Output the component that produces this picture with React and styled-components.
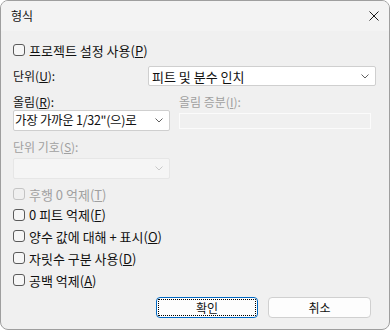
import React from "react";
import styled, { createGlobalStyle } from "styled-components";

const GlobalStyle = createGlobalStyle`
  html, body {
    margin: 0;
    padding: 0;
    background: #ffffff;
  }
  body {
    font-family: "Noto Sans CJK KR", "Noto Sans", sans-serif;
    font-size: 12px;
    color: #111;
  }
`;

const Window = styled.div`
  width: 390px;
  height: 330px;
  box-sizing: border-box;
  border: 1px solid #9e9e9e;
  border-radius: 8px;
  overflow: hidden;
  background: #f0f0f0;
  display: flex;
  flex-direction: column;
`;

const TitleBar = styled.div`
  height: 30px;
  flex: none;
  background: #f3f3f3;
  display: flex;
  align-items: center;
  justify-content: space-between;
  padding: 0 10px;
`;

const Title = styled.span`
  font-size: 12px;
  line-height: 1;
`;

const CloseIcon = styled.svg`
  width: 10px;
  height: 10px;
  display: block;
`;

const Body = styled.div`
  flex: 1;
  padding: 9px 12px 0 12px;
  display: flex;
  flex-direction: column;
`;

const Mn = styled.span`
  text-decoration: underline;
  text-underline-offset: 1px;
`;

const CheckRow = styled.label`
  height: ${(p) => p.$h || 20}px;
  margin-top: ${(p) => p.$mt || 0}px;
  display: flex;
  align-items: center;
  gap: 4px;
  color: ${(p) => (p.$disabled ? "#a0a0a0" : "#111")};
  font-size: 13px;
  line-height: 1;
`;

const Box = styled.span`
  width: 12px;
  height: 12px;
  box-sizing: border-box;
  border: 1px solid ${(p) => (p.$disabled ? "#c4c4c4" : "#5a5a5a")};
  border-radius: 3px;
  background: ${(p) => (p.$disabled ? "#f0f0f0" : "#f6f6f6")};
  flex: none;
`;

const UnitRow = styled.div`
  margin-top: 6px;
  height: 20px;
  display: flex;
  align-items: center;
`;

const Label = styled.span`
  color: ${(p) => (p.$disabled ? "#a0a0a0" : "#111")};
  line-height: 16px;
  height: 16px;
  display: block;
`;

const UnitLabel = styled(Label)`
  width: 135px;
  flex: none;
`;

const Select = styled.div`
  width: ${(p) => p.$w}px;
  height: ${(p) => p.$h || 21}px;
  margin-top: ${(p) => p.$mt || 0}px;
  box-sizing: border-box;
  border: 1px solid ${(p) => (p.$disabled ? "#e6e6e6" : "#cfcfcf")};
  border-radius: 2px;
  background: ${(p) => (p.$disabled ? "#f5f5f5" : "#ffffff")};
  display: flex;
  align-items: center;
  justify-content: space-between;
  padding: 0 6px 0 ${(p) => p.$pl || 3}px;
  font-size: ${(p) => p.$fs || 12}px;
  letter-spacing: ${(p) => p.$ls || 0}px;
  line-height: 1;
`;

const Chevron = styled.svg`
  width: 8px;
  height: 5px;
  display: block;
  flex: none;
`;

const FieldGrid = styled.div`
  margin-top: 8px;
  display: grid;
  grid-template-columns: 157px 192px;
  column-gap: 9px;
  align-items: start;
`;

const Edit = styled.div`
  margin-top: 3px;
  height: 16px;
  box-sizing: border-box;
  border: 1px solid #fbfbfb;
  background: #f0f0f0;
`;

const Spacer = styled.div`
  height: ${(p) => p.$h}px;
`;

const Buttons = styled.div`
  margin-top: auto;
  padding: 0 6px 11px 0;
  display: flex;
  justify-content: flex-end;
  gap: 10px;
`;

const Button = styled.div`
  position: relative;
  width: ${(p) => p.$w}px;
  height: 21px;
  box-sizing: border-box;
  border: 1px solid ${(p) => (p.$default ? "#0067c0" : "#d0d0d0")};
  border-radius: 4px;
  background: #fdfdfd;
  display: flex;
  align-items: center;
  justify-content: center;
  font-size: 12px;
  line-height: 1;

  ${(p) =>
    p.$default &&
    `
    &::after {
      content: "";
      position: absolute;
      inset: 1px;
      border: 1px dotted #000;
      border-radius: 1px;
    }
  `}
`;

function ChevronDown({ color = "#606060" }) {
  return (
    <Chevron viewBox="0 0 8 5">
      <path d="M0.5 0.5 L4 4 L7.5 0.5" fill="none" stroke={color} strokeWidth="1" />
    </Chevron>
  );
}

function Check({ children, disabled, mt, h }) {
  return (
    <CheckRow $disabled={disabled} $mt={mt} $h={h}>
      <Box $disabled={disabled} />
      <span>{children}</span>
    </CheckRow>
  );
}

export default function App() {
  return (
    <>
      <GlobalStyle />
      <Window>
        <TitleBar>
          <Title>형식</Title>
          <CloseIcon viewBox="0 0 10 10">
            <path d="M0.5 0.5 L9.5 9.5 M9.5 0.5 L0.5 9.5" stroke="#1a1a1a" strokeWidth="1" />
          </CloseIcon>
        </TitleBar>
        <Body>
          <Check>
            프로젝트 설정 사용(<Mn>P</Mn>)
          </Check>
          <UnitRow>
            <UnitLabel>
              단위(<Mn>U</Mn>):
            </UnitLabel>
            <Select $w={228} $h={20} $fs={13}>
              <span>피트 및 분수 인치</span>
              <ChevronDown />
            </Select>
          </UnitRow>
          <FieldGrid>
            <Label>
              올림(<Mn>R</Mn>):
            </Label>
            <Label $disabled>
              올림 증분(<Mn>I</Mn>):
            </Label>
            <Select $w={157} $fs={12.5} $ls={-0.3} $pl={1}>
              <span>가장 가까운 1/32"(으)로</span>
              <ChevronDown />
            </Select>
            <Edit />
            <Spacer $h={8} />
            <Spacer $h={8} />
            <Label $disabled>
              단위 기호(<Mn>S</Mn>):
            </Label>
            <span />
            <Select $w={157} $mt={3} $disabled>
              <span />
              <ChevronDown color="#c8c8c8" />
            </Select>
          </FieldGrid>
          <Check disabled mt={5}>
            후행 0 억제(<Mn>T</Mn>)
          </Check>
          <Check h={21}>
            0 피트 억제(<Mn>F</Mn>)
          </Check>
          <Check h={22}>
            양수 값에 대해 + 표시(<Mn>O</Mn>)
          </Check>
          <Check h={22}>
            자릿수 구분 사용(<Mn>D</Mn>)
          </Check>
          <Check h={22}>
            공백 억제(<Mn>A</Mn>)
          </Check>
          <Buttons>
            <Button $w={102} $default>
              확인
            </Button>
            <Button $w={103}>취소</Button>
          </Buttons>
        </Body>
      </Window>
    </>
  );
}
